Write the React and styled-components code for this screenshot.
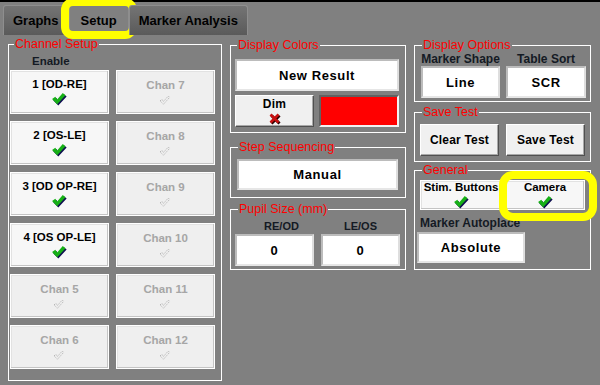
import React from "react";
import styled, { createGlobalStyle } from "styled-components";

const Global = createGlobalStyle`
  html, body { margin: 0; padding: 0; background: #808080; }
  #root { width: 600px; height: 385px; }
  *, *::before, *::after { box-sizing: border-box; }
`;

const Screen = styled.div`
  position: relative;
  width: 600px;
  height: 385px;
  overflow: hidden;
  background: #808080;
  font-family: "Liberation Sans", Arial, sans-serif;
  color: #000;
`;

const TabStrip = styled.div`
  height: 35px;
  border-top: 2px solid #000;
  display: flex;
  align-items: flex-end;
  padding-left: 3px;
`;

const Tab = styled.div`
  position: relative;
  height: ${(p) => (p.$active ? 31 : 30)}px;
  padding: 0 ${(p) => (p.$active ? 11 : 9)}px;
  display: flex;
  align-items: center;
  justify-content: center;
  font-size: 13px;
  font-weight: bold;
  color: #000;
  background: ${(p) => (p.$active ? "#808080" : "linear-gradient(#747474, #5a5a5a)")};
  border: 1px solid #8e8e8e;
  border-top: ${(p) => (p.$active ? "2px solid #1f7fe0" : "1px solid #8e8e8e")};
  border-bottom: none;
  border-radius: 3px 3px 0 0;
`;

const TabRing = styled.div`
  position: absolute;
  top: -8px;
  left: -9px;
  right: -9px;
  bottom: -4px;
  border: 8px solid #ffff00;
  border-radius: 12px;
  pointer-events: none;
`;

const Content = styled.div`
  display: flex;
  gap: 8px;
  padding-left: 8px;
`;

const Column = styled.div`
  display: flex;
  flex-direction: column;
  width: ${(p) => p.$w}px;
  padding-top: ${(p) => p.$top}px;
`;

const GroupBox = styled.fieldset`
  margin: ${(p) => p.$mt || 0}px 0 0 0;
  padding: 0;
  min-width: 0;
  border: 1px solid #ffffff;
`;

const Legend = styled.legend`
  color: #ff0000;
  font-size: 12.5px;
  line-height: 15px;
  padding: 0 1px;
  margin-left: ${(p) => p.$indent}px;
`;

const Body = styled.div`
  padding: ${(p) => p.$pad};
`;

const EnableLabel = styled.div`
  font-size: 11.5px;
  font-weight: bold;
  line-height: 14px;
  margin: 2px 0 2px 22px;
  color: #141a24;
`;

const ChannelGrid = styled.div`
  display: grid;
  grid-template-columns: 99px 99px;
  grid-auto-rows: 44px;
  gap: 7px;
`;

const CheckButton = styled.div`
  position: relative;
  display: flex;
  flex-direction: column;
  align-items: center;
  justify-content: center;
  gap: ${(p) => (p.$disabled ? 3 : 2)}px;
  height: ${(p) => p.$h || 44}px;
  background: ${(p) => (p.$disabled ? "#efefef" : "#f7f7f7")};
  border: 1px solid #ffffff;
  box-shadow: inset -1px -1px 0 #c4c4c4, inset 1px 1px 0 #e2e2e2;
  font-size: 11.5px;
  font-weight: bold;
  line-height: 13px;
  color: ${(p) => (p.$disabled ? "#a6a6a6" : "#000")};
  white-space: nowrap;
`;

const CameraRing = styled.div`
  position: absolute;
  top: -10px;
  left: -7px;
  right: -13px;
  bottom: -12px;
  border: 8px solid #ffff00;
  border-radius: 14px;
  pointer-events: none;
`;

const ValueBox = styled.div`
  display: flex;
  align-items: center;
  justify-content: center;
  height: ${(p) => p.$h}px;
  background: #ffffff;
  border-style: solid;
  border-width: 2px;
  border-color: #bcbcbc #dedede #e6e6e6 #bcbcbc;
  font-size: 13px;
  font-weight: bold;
  letter-spacing: 0.6px;
  color: #000;
`;

const ActionButton = styled.div`
  display: flex;
  flex-direction: column;
  align-items: center;
  justify-content: center;
  gap: 2px;
  height: ${(p) => p.$h}px;
  background: #f0f0f0;
  border-style: solid;
  border-width: 1px;
  border-color: #ffffff #505050 #505050 #ffffff;
  box-shadow: inset -1px -1px 0 #a8a8a8;
  font-size: 12px;
  font-weight: bold;
  letter-spacing: 0.2px;
  line-height: 13px;
  color: #000;
`;

const Swatch = styled.div`
  height: 32px;
  background: #ff0000;
  border-style: solid;
  border-width: 2px;
  border-color: #626262 #f2f2f2 #f2f2f2 #626262;
`;

const Pair = styled.div`
  display: grid;
  grid-template-columns: ${(p) => p.$cols};
  gap: ${(p) => p.$gap}px;
  margin-top: ${(p) => p.$mt || 0}px;
`;

const FieldLabel = styled.div`
  font-size: ${(p) => p.$size || 12}px;
  font-weight: bold;
  line-height: ${(p) => p.$lh || 14}px;
  text-align: center;
  padding-left: ${(p) => p.$shift || 0}px;
  color: #141a24;
  white-space: nowrap;
`;

const AutoplaceLabel = styled.div`
  font-size: 12px;
  font-weight: bold;
  line-height: 14px;
  margin-top: 6px;
  color: #141a24;
`;

const AutoplaceBox = styled(ValueBox)`
  width: 108px;
  margin: 2px 0 0 -3px;
`;

const Check = () => (
  <svg width="15" height="13" viewBox="0 0 16 14">
    <polygon points="1.2,7.8 4.7,5.3 6.7,8.3 12.7,1.3 15.7,3.8 6.7,13.5" fill="#101050" />
    <polygon points="0,6.5 3.5,4 5.5,7 11.5,0 14.5,2.5 5.5,12.2" fill="#16b016" />
  </svg>
);

const FadedCheck = () => (
  <svg width="11" height="11" viewBox="0 0 16 14">
    <polygon
      points="0,7.5 3,5.5 5,8.5 12,0.5 14,2.5 5,12.5"
      fill="none"
      stroke="#b4b4b4"
      strokeWidth="1.4"
      strokeDasharray="2 1.6"
    />
  </svg>
);

const Cross = () => (
  <svg width="12" height="12" viewBox="0 0 12 12">
    <path d="M2.5 2.5 L10.5 10.5 M10.5 2.5 L2.5 10.5" stroke="#2a0000" strokeWidth="3" />
    <path d="M1.5 1.5 L9.5 9.5 M9.5 1.5 L1.5 9.5" stroke="#c81010" strokeWidth="2.6" />
  </svg>
);

const channels = [
  { label: "1 [OD-RE]", on: true },
  { label: "Chan 7" },
  { label: "2 [OS-LE]", on: true },
  { label: "Chan 8" },
  { label: "3 [OD OP-RE]", on: true },
  { label: "Chan 9" },
  { label: "4 [OS OP-LE]", on: true },
  { label: "Chan 10" },
  { label: "Chan 5" },
  { label: "Chan 11" },
  { label: "Chan 6" },
  { label: "Chan 12" },
];

export default function App() {
  return (
    <Screen>
      <Global />
      <TabStrip>
        <Tab>Graphs</Tab>
        <Tab $active>
          Setup
          <TabRing />
        </Tab>
        <Tab>Marker Analysis</Tab>
      </TabStrip>

      <Content>
        <Column $w={214} $top={2}>
          <GroupBox>
            <Legend $indent={5}>Channel Setup</Legend>
            <Body $pad="0 6px 11px 1px">
              <EnableLabel>Enable</EnableLabel>
              <ChannelGrid>
                {channels.map((c) => (
                  <CheckButton key={c.label} $disabled={!c.on}>
                    <span>{c.label}</span>
                    {c.on ? <Check /> : <FadedCheck />}
                  </CheckButton>
                ))}
              </ChannelGrid>
            </Body>
          </GroupBox>
        </Column>

        <Column $w={176} $top={3}>
          <GroupBox>
            <Legend $indent={6}>Display Colors</Legend>
            <Body $pad="6px 6px 5px 4px">
              <ValueBox $h={32}>New Result</ValueBox>
              <Pair $cols="79px 80px" $gap={5} $mt={4}>
                <ActionButton $h={32}>
                  <span>Dim</span>
                  <Cross />
                </ActionButton>
                <Swatch />
              </Pair>
            </Body>
          </GroupBox>

          <GroupBox $mt={7}>
            <Legend $indent={7}>Step Sequencing</Legend>
            <Body $pad="4px 7px 7px 6px">
              <ValueBox $h={31}>Manual</ValueBox>
            </Body>
          </GroupBox>

          <GroupBox $mt={4}>
            <Legend $indent={7}>Pupil Size (mm)</Legend>
            <Body $pad="2px 5px 3px 4px">
              <Pair $cols="79px 79px" $gap={7}>
                <FieldLabel $size={11} $shift={14}>RE/OD</FieldLabel>
                <FieldLabel $size={11}>LE/OS</FieldLabel>
              </Pair>
              <Pair $cols="79px 79px" $gap={7} $mt={1}>
                <ValueBox $h={32}>0</ValueBox>
                <ValueBox $h={32}>0</ValueBox>
              </Pair>
            </Body>
          </GroupBox>
        </Column>

        <Column $w={177} $top={3}>
          <GroupBox>
            <Legend $indent={7}>Display Options</Legend>
            <Body $pad="0 4px 3px 6px">
              <Pair $cols="79px 80px" $gap={6}>
                <FieldLabel $lh={13}>Marker Shape</FieldLabel>
                <FieldLabel $lh={13}>Table Sort</FieldLabel>
              </Pair>
              <Pair $cols="79px 80px" $gap={6}>
                <ValueBox $h={32}>Line</ValueBox>
                <ValueBox $h={32}>SCR</ValueBox>
              </Pair>
            </Body>
          </GroupBox>

          <GroupBox $mt={3}>
            <Legend $indent={7}>Save Test</Legend>
            <Body $pad="4px 5px 5px 5px">
              <Pair $cols="79px 79px" $gap={7}>
                <ActionButton $h={32}>Clear Test</ActionButton>
                <ActionButton $h={32}>Save Test</ActionButton>
              </Pair>
            </Body>
          </GroupBox>

          <GroupBox $mt={1}>
            <Legend $indent={7}>General</Legend>
            <Body $pad="2px 5px 6px 5px">
              <Pair $cols="82px 80px" $gap={3}>
                <CheckButton $h={30}>
                  <span>Stim. Buttons</span>
                  <Check />
                </CheckButton>
                <CheckButton $h={30}>
                  <span>Camera</span>
                  <Check />
                  <CameraRing />
                </CheckButton>
              </Pair>
              <AutoplaceLabel>Marker Autoplace</AutoplaceLabel>
              <AutoplaceBox $h={31}>Absolute</AutoplaceBox>
            </Body>
          </GroupBox>
        </Column>
      </Content>
    </Screen>
  );
}
